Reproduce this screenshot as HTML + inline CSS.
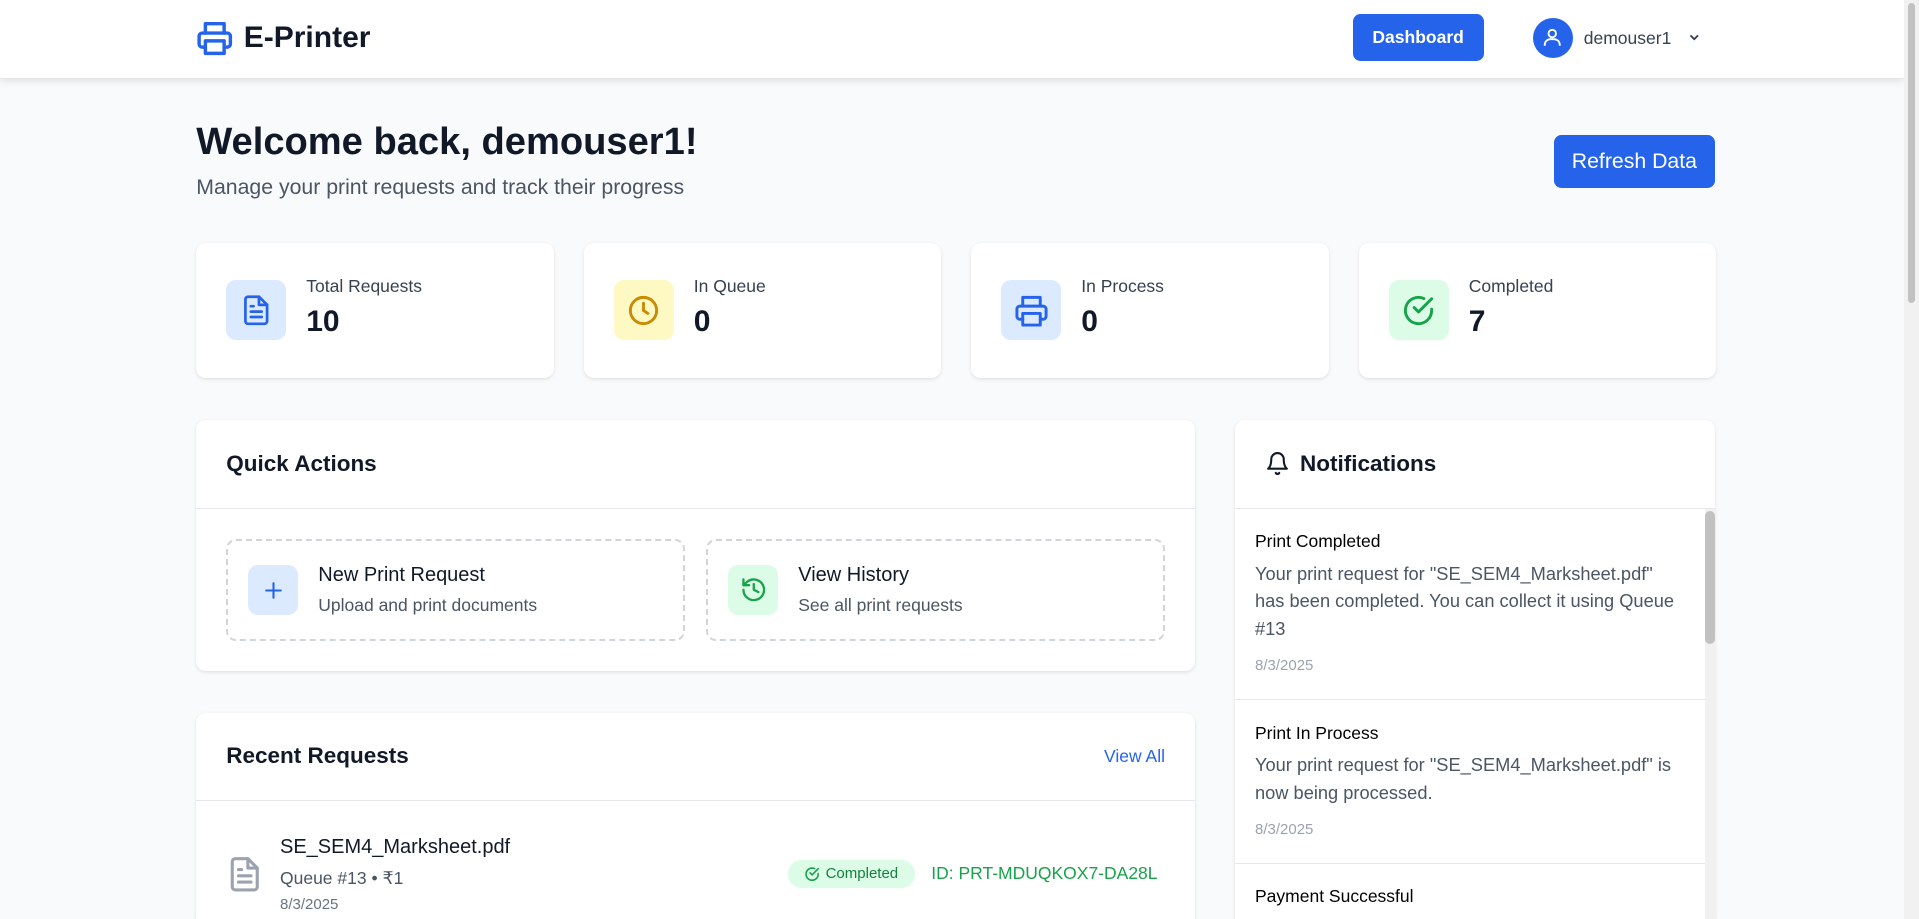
<!DOCTYPE html>
<html><head><meta charset="utf-8">
<style>
html{zoom:1.25;overflow:hidden;height:735px}
*{box-sizing:border-box;margin:0;padding:0}
body{width:1535px;height:735px;overflow:hidden;background:#f9fafb;font-family:"Liberation Sans",sans-serif;color:#111827;position:relative}
.sb{position:absolute;right:0;top:0;width:12px;height:735px;background:#f1f1f1}
.sb i{position:absolute;left:3px;top:2px;width:6px;height:240px;background:#c1c1c1;border-radius:3px}
header{position:absolute;left:0;top:0;width:1523px;height:62px;background:#fff;box-shadow:0 2px 6px rgba(0,0,0,.12)}
.logo{position:absolute;left:157px;top:15px;display:flex;align-items:center;gap:8px;font-weight:bold;font-size:24px}
.btn{background:#2563eb;color:#fff;border-radius:6px;font-weight:bold;display:flex;align-items:center;justify-content:center}
.card{background:#fff;border-radius:8px;box-shadow:0 1px 3px rgba(0,0,0,.1)}
.stat{position:absolute;top:194px;width:286px;height:108px;display:flex;align-items:center;padding:0 24px}
.ib{width:48px;height:48px;border-radius:8px;display:flex;align-items:center;justify-content:center;margin-right:16px}
.stat .l{font-size:14px;color:#374151;margin-top:-4px}
.stat .n{font-size:24px;font-weight:bold;margin-top:6px}
.ch{height:71px;border-bottom:1px solid #e5e7eb;display:flex;align-items:center;padding:0 24px;font-size:18px;font-weight:bold;justify-content:space-between}
.qa{position:absolute;top:95px;width:367px;height:82px;border:2px dashed #d1d5db;border-radius:8px;display:flex;align-items:center;padding:0 16px}
.qa .ib{width:40px;height:40px;margin-right:16px}
.qa .t{font-size:16px;color:#111827}
.qa .s{font-size:14px;color:#4b5563;margin-top:6px}
.ni{padding:18px 24px 16px 16px;border-bottom:1px solid #e5e7eb}
.ni .t{font-size:14px;color:#000}
.ni .b{font-size:14.6px;color:#4b5563;line-height:22px;margin-top:6px;width:336px}
.ni .d{font-size:12px;color:#9ca3af;margin-top:12px}
</style></head><body>
<header>
 <div class="logo"><svg width="30" height="30" viewBox="0 0 24 24" fill="none" stroke="#2563eb" stroke-width="2.2" stroke-linecap="round" stroke-linejoin="round"><path d="M6 9V3h12v6"/><path d="M6 18H4a2 2 0 0 1-2-2v-5a2 2 0 0 1 2-2h16a2 2 0 0 1 2 2v5a2 2 0 0 1-2 2h-2"/><rect x="6" y="14" width="12" height="8"/></svg><span>E-Printer</span></div>
 <div class="btn" style="position:absolute;left:1082px;top:11px;width:105px;height:38px;font-size:14px">Dashboard</div>
 <div style="position:absolute;left:1226px;top:14px;width:32px;height:32px;border-radius:50%;background:#2563eb;display:flex;align-items:center;justify-content:center"><svg width="18" height="18" viewBox="0 0 24 24" fill="none" stroke="#fff" stroke-width="2"><circle cx="12" cy="8" r="4"/><path d="M4 21v-1a6 6 0 0 1 6-6h4a6 6 0 0 1 6 6v1"/></svg></div>
 <div style="position:absolute;left:1267px;top:22px;font-size:14px;color:#374151">demouser1</div>
 <svg style="position:absolute;left:1350px;top:25px" width="10" height="10" viewBox="0 0 10 10" fill="none" stroke="#374151" stroke-width="1.5"><path d="M2 3.5l3 3 3-3"/></svg>
</header>

<div style="position:absolute;left:157px;top:96px;font-size:30.5px;font-weight:bold">Welcome back, demouser1!</div>
<div style="position:absolute;left:157px;top:140px;font-size:17px;color:#4b5563">Manage your print requests and track their progress</div>
<div class="btn" style="position:absolute;left:1243px;top:108px;width:129px;height:42px;font-size:17px;font-weight:normal">Refresh Data</div>

<div class="card stat" style="left:157px"><div class="ib" style="background:#dbeafe"><svg width="26" height="26" viewBox="0 0 24 24" fill="none" stroke="#2563eb" stroke-width="2" stroke-linecap="round" stroke-linejoin="round"><path d="M14 2H6a2 2 0 0 0-2 2v16a2 2 0 0 0 2 2h12a2 2 0 0 0 2-2V8z"/><path d="M14 2v6h6M16 13H8M16 17H8M10 9H8"/></svg></div><div><div class="l">Total Requests</div><div class="n">10</div></div></div>
<div class="card stat" style="left:467px"><div class="ib" style="background:#fef9c3"><svg width="28" height="28" viewBox="0 0 24 24" fill="none" stroke="#ca8a04" stroke-width="2" stroke-linecap="round"><circle cx="12" cy="12" r="9"/><path d="M12 7v5l3 2"/></svg></div><div><div class="l">In Queue</div><div class="n">0</div></div></div>
<div class="card stat" style="left:777px"><div class="ib" style="background:#dbeafe"><svg width="28" height="28" viewBox="0 0 24 24" fill="none" stroke="#2563eb" stroke-width="2" stroke-linecap="round" stroke-linejoin="round"><path d="M6 9V3h12v6"/><path d="M6 18H4a2 2 0 0 1-2-2v-5a2 2 0 0 1 2-2h16a2 2 0 0 1 2 2v5a2 2 0 0 1-2 2h-2"/><rect x="6" y="14" width="12" height="8"/></svg></div><div><div class="l">In Process</div><div class="n">0</div></div></div>
<div class="card stat" style="left:1087px"><div class="ib" style="background:#dcfce7"><svg width="28" height="28" viewBox="0 0 24 24" fill="none" stroke="#16a34a" stroke-width="2" stroke-linecap="round" stroke-linejoin="round"><path d="M21 11.1V12a9 9 0 1 1-5.3-8.2"/><path d="M21 4L12 13l-3-3"/></svg></div><div><div class="l">Completed</div><div class="n">7</div></div></div>

<div class="card" style="position:absolute;left:157px;top:336px;width:799px;height:201px">
 <div class="ch">Quick Actions</div>
 <div class="qa" style="left:24px"><div class="ib" style="background:#dbeafe"><svg width="20" height="20" viewBox="0 0 24 24" fill="none" stroke="#2563eb" stroke-width="2" stroke-linecap="round"><path d="M12 5v14M5 12h14"/></svg></div><div><div class="t">New Print Request</div><div class="s">Upload and print documents</div></div></div>
 <div class="qa" style="left:408px"><div class="ib" style="background:#dcfce7"><svg width="22" height="22" viewBox="0 0 24 24" fill="none" stroke="#16a34a" stroke-width="2" stroke-linecap="round" stroke-linejoin="round"><path d="M3 12a9 9 0 1 0 3-6.7L3 8"/><path d="M3 3v5h5M12 7v5l4 2"/></svg></div><div><div class="t">View History</div><div class="s">See all print requests</div></div></div>
</div>

<div class="card" style="position:absolute;left:157px;top:570px;width:799px;height:165px;overflow:hidden;border-bottom-left-radius:0;border-bottom-right-radius:0">
 <div class="ch">Recent Requests<span style="font-size:14px;font-weight:normal;color:#2563eb">View All</span></div>
 <svg style="position:absolute;left:24px;top:112px" width="30" height="34" viewBox="0 0 24 24" fill="none" stroke="#9ca3af" stroke-width="2" stroke-linecap="round" stroke-linejoin="round"><path d="M14 2H6a2 2 0 0 0-2 2v16a2 2 0 0 0 2 2h12a2 2 0 0 0 2-2V8z"/><path d="M14 2v6h6M16 13H8M16 17H8M10 9H8"/></svg>
 <div style="position:absolute;left:67px;top:99px;font-size:16px;color:#111827">SE_SEM4_Marksheet.pdf</div>
 <div style="position:absolute;left:67px;top:124px;font-size:14px;color:#4b5563">Queue #13 • ₹1</div>
 <div style="position:absolute;left:67px;top:147px;font-size:12px;color:#6b7280">8/3/2025</div>
 <div style="position:absolute;left:473px;top:118px;width:102px;height:22px;border-radius:11px;background:#dcfce7;color:#15803d;font-size:12px;display:flex;align-items:center;justify-content:center;gap:4px"><svg width="13" height="13" viewBox="0 0 24 24" fill="none" stroke="#16a34a" stroke-width="2.4" stroke-linecap="round"><path d="M21 11.1V12a9 9 0 1 1-5.3-8.2"/><path d="M21 4L12 13l-3-3"/></svg>Completed</div>
 <div style="position:absolute;left:588px;top:120px;font-size:14px;color:#16a34a">ID: PRT-MDUQKOX7-DA28L</div>
</div>

<div class="card" style="position:absolute;left:988px;top:336px;width:384px;height:399px;overflow:hidden;border-bottom-left-radius:0;border-bottom-right-radius:0">
 <div class="ch" style="justify-content:flex-start;gap:8px"><svg width="20" height="20" viewBox="0 0 24 24" fill="none" stroke="#111827" stroke-width="2" stroke-linecap="round" stroke-linejoin="round"><path d="M6 8a6 6 0 0 1 12 0c0 7 3 9 3 9H3s3-2 3-9"/><path d="M10.3 21a1.9 1.9 0 0 0 3.4 0"/></svg>Notifications</div>
 <div style="position:absolute;right:0;top:71px;width:8px;height:400px;background:#f1f1f1"><div style="margin-top:2px;height:106px;background:#c1c1c1;border-radius:4px"></div></div>
 <div style="width:376px">
  <div class="ni" style="height:153px"><div class="t">Print Completed</div><div class="b">Your print request for "SE_SEM4_Marksheet.pdf" has been completed. You can collect it using Queue #13</div><div class="d">8/3/2025</div></div>
  <div class="ni" style="height:131px"><div class="t">Print In Process</div><div class="b">Your print request for "SE_SEM4_Marksheet.pdf" is now being processed.</div><div class="d">8/3/2025</div></div>
  <div class="ni"><div class="t">Payment Successful</div></div>
 </div>
</div>

<div class="sb"><i></i></div>
</body></html>
